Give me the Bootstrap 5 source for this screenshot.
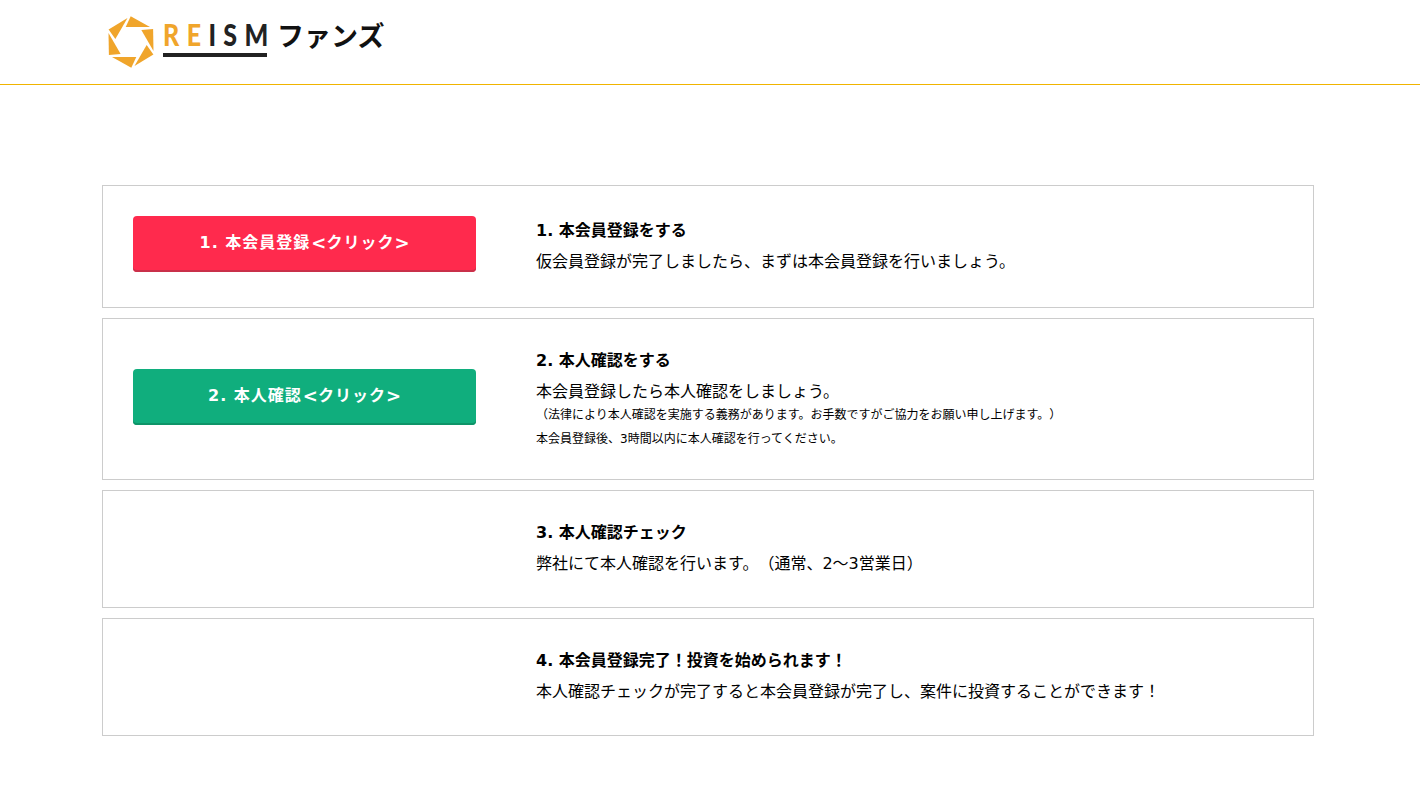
<!doctype html>
<html lang="ja"><head><meta charset="utf-8">
<link href="https://cdn.jsdelivr.net/npm/bootstrap@5.3.0/dist/css/bootstrap.min.css" rel="stylesheet">
<style>
body{font-family:"DejaVu Sans","Noto Sans CJK JP",sans-serif;font-size:16px;line-height:1.5;color:#000;background:#fff;text-spacing-trim:space-all}
.top-bar{height:85px;border-bottom:1px solid #f0b400;padding-left:107px}
.logo-mark{margin-right:8px}
.logo-text{margin-bottom:12px}
.logo-word{display:block;width:104px;height:33px;margin-top:9px;border-bottom:4px solid #222;white-space:nowrap}
.logo-letters{display:inline-block;font-family:"Lato","Liberation Sans",sans-serif;font-weight:900;font-size:25px;letter-spacing:7.4px;line-height:27px;color:#222;transform:scaleY(1.2);transform-origin:50% 100%}
.logo-letters b{color:#f0a52b;font-weight:900}
.logo-kana{font-family:"Noto Sans CJK JP",sans-serif;font-weight:700;font-size:27px;line-height:32px;color:#111;margin-left:10px;margin-top:4px}
.step-list{width:1212px;margin:100px 0 0 102px}
.step-box{border:1px solid #ccc;padding:30px}
.step-action{width:343px;margin-right:60px}
.step-btn{height:56px;margin-bottom:5px;padding-bottom:8px;font-size:16px;font-weight:700;color:#fff;border:0;border-radius:4px;letter-spacing:1px}
.step-btn:hover{color:#fff}
.chev{font-size:18px;line-height:1;letter-spacing:0}
.chev.open{margin-left:1px}
.step-btn.red,.step-btn.red:hover{background:#ff2a4d;box-shadow:inset 0 -2px 0 #c9304a}
.step-btn.green,.step-btn.green:hover{background:#10ae7d;box-shadow:inset 0 -2px 0 #0e9468}
.step-title{font-weight:700;margin-bottom:7px}
.step-body{padding-bottom:1px}
.fine{font-size:12px;line-height:20px}
.steps-gap{gap:10px}
</style></head><body>
<header class="top-bar d-flex align-items-center">
<svg class="logo-mark" width="48" height="54" viewBox="0 0 48 54"><g fill="#f0a52b"><polygon points="23.7,1.3 43,12 18.7,12"/><polygon points="23.7,1.3 43,12 18.7,12" transform="rotate(60 24 27)"/><polygon points="23.7,1.3 43,12 18.7,12" transform="rotate(120 24 27)"/><polygon points="23.7,1.3 43,12 18.7,12" transform="rotate(180 24 27)"/><polygon points="23.7,1.3 43,12 18.7,12" transform="rotate(240 24 27)"/><polygon points="23.7,1.3 43,12 18.7,12" transform="rotate(300 24 27)"/></g></svg>
<div class="logo-text d-flex align-items-start">
<span class="logo-word"><span class="logo-letters"><b>RE</b>ISM</span></span><span class="logo-kana">ファンズ</span>
</div>
</header>
<main class="step-list d-flex flex-column steps-gap">
<section class="step-box d-flex align-items-center">
<div class="step-action flex-shrink-0"><a href="#" class="btn step-btn red w-100 d-flex align-items-center justify-content-center">1. 本会員登録<span class="chev open">&lt;</span>クリック<span class="chev">&gt;</span></a></div>
<div><div class="step-title">1. 本会員登録をする</div><div class="step-body">仮会員登録が完了しましたら、まずは本会員登録を行いましょう。</div></div>
</section>
<section class="step-box d-flex align-items-center">
<div class="step-action flex-shrink-0"><a href="#" class="btn step-btn green w-100 d-flex align-items-center justify-content-center">2. 本人確認<span class="chev open">&lt;</span>クリック<span class="chev">&gt;</span></a></div>
<div><div class="step-title">2. 本人確認をする</div><div class="step-body">本会員登録したら本人確認をしましょう。</div><div class="fine">（法律により本人確認を実施する義務があります。お手数ですがご協力をお願い申し上げます。）</div><div class="fine mt-1">本会員登録後、3時間以内に本人確認を行ってください。</div></div>
</section>
<section class="step-box d-flex">
<div class="step-action flex-shrink-0"></div>
<div><div class="step-title">3. 本人確認チェック</div><div class="step-body">弊社にて本人確認を行います。（通常、2～3営業日）</div></div>
</section>
<section class="step-box d-flex">
<div class="step-action flex-shrink-0"></div>
<div><div class="step-title">4. 本会員登録完了！投資を始められます！</div><div class="step-body">本人確認チェックが完了すると本会員登録が完了し、案件に投資することができます！</div></div>
</section>
</main>
</body></html>
